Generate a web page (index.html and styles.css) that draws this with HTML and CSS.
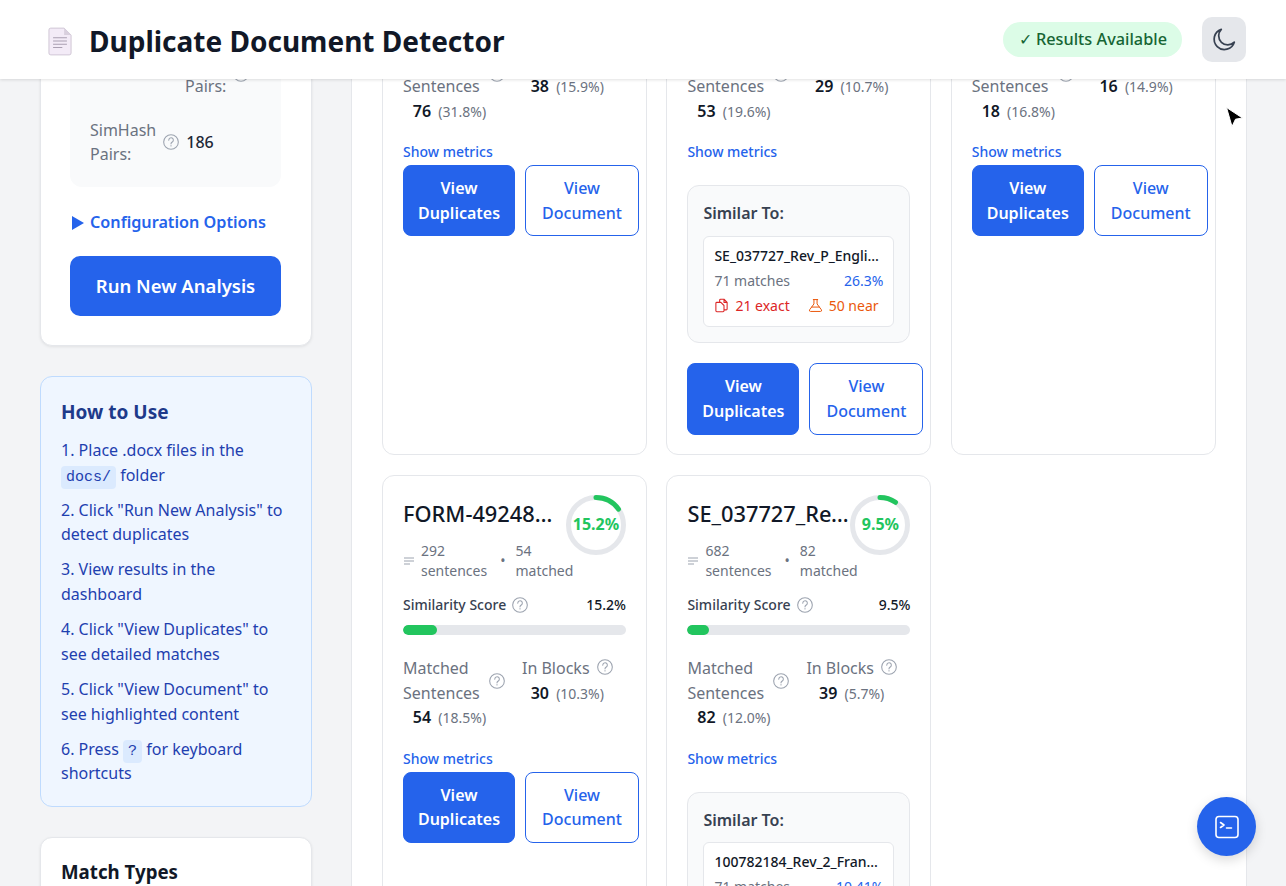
FILE: index.html
```html
<!DOCTYPE html>
<html lang="en">
<head>
  <meta charset="UTF-8">
  <meta name="viewport" content="width=device-width, initial-scale=1.0">
  <title>Duplicate Document Detector</title>
  <link rel="stylesheet" href="styles.css">
</head>
<body>
  <svg class="sprite" aria-hidden="true">
    <symbol id="help" viewBox="0 0 24 24">
      <circle cx="12" cy="12" r="11" fill="none" stroke="currentColor" stroke-width="1.6"/>
      <path d="M8.7 9.200a3.400 3.400 0 1 1 5.200 2.800c-1.200.8-1.900 1.500-1.900 2.800" fill="none" stroke="currentColor" stroke-width="1.6" stroke-linecap="round"/>
      <circle cx="12" cy="17.800" r="1.100" fill="currentColor"/>
    </symbol>
    <symbol id="lines" viewBox="0 0 12 12">
      <path d="M1 3h10M1 6h10M1 9h6" fill="none" stroke="currentColor" stroke-width="1"/>
    </symbol>
    <symbol id="copy" viewBox="0 0 24 24">
      <path d="M9 7V3.500A1.500 1.500 0 0 1 10.500 2H16l5 5v10.500a1.500 1.500 0 0 1-1.500 1.500H16M16 2v5h5M4.500 7H11l5 5v8.500a1.500 1.500 0 0 1-1.500 1.500h-10A1.500 1.500 0 0 1 3 20.500v-12A1.500 1.500 0 0 1 4.500 7z" fill="none" stroke="currentColor" stroke-width="1.7" stroke-linejoin="round"/>
    </symbol>
    <symbol id="flask" viewBox="0 0 24 24">
      <path d="M8.500 2.500h7M9.500 2.500v7L2.600 18.800A1.800 1.800 0 0 0 4 21.500h16a1.800 1.800 0 0 0 1.400-2.700L14.500 9.500v-7M6 14.500h12" fill="none" stroke="currentColor" stroke-width="1.600" stroke-linecap="round" stroke-linejoin="round"/>
    </symbol>
  </svg>

  <header class="topbar">
    <div class="brand">
      <svg class="brand-icon" width="24" height="29" viewBox="0 0 26 30">
        <path d="M3 .5h14.500L25 8v19.500a2 2 0 0 1-2 2H3a2 2 0 0 1-2-2v-25a2 2 0 0 1 2-2z" fill="#f3ebf7" stroke="#cdc3d3"/>
        <path d="M17.500.5V8H25z" fill="#d9d0de"/>
        <path d="M5.500 11h15M5.500 14.500h15M5.500 18h15M5.500 21.500h10" stroke="#aaa0b2" stroke-width="1.200"/>
      </svg>
      <h1>Duplicate Document Detector</h1>
    </div>
    <div class="topbar-actions">
      <span class="status-pill">✓ Results Available</span>
      <button class="theme-btn" aria-label="Toggle theme">
        <svg width="26" height="26" viewBox="0 0 24 24" fill="none" stroke="#374151" stroke-width="1.600" stroke-linecap="round" stroke-linejoin="round">
          <path d="M21.500 14A9.500 9.500 0 1 1 9.500 2.200 8 8 0 0 0 21.500 14z"/>
        </svg>
      </button>
    </div>
  </header>

  <div class="layout">
    <aside class="sidebar">
      <section class="panel panel-run">
        <div class="stat-box">
          <div class="stat stat-offset">
            <span class="stat-label">Exact Pairs:</span>
            <svg class="help"><use href="#help"/></svg>
          </div>
          <div class="stat">
            <span class="stat-label">SimHash Pairs:</span>
            <svg class="help"><use href="#help"/></svg>
            <span class="stat-value">186</span>
          </div>
        </div>
        <div class="config-toggle"><span class="caret"></span>Configuration Options</div>
        <button class="run-btn">Run New Analysis</button>
      </section>

      <section class="panel-help">
        <h3>How to Use</h3>
        <p>1. Place .docx files in the <code>docs/</code> folder</p>
        <p>2. Click "Run New Analysis" to detect duplicates</p>
        <p>3. View results in the dashboard</p>
        <p>4. Click "View Duplicates" to see detailed matches</p>
        <p>5. Click "View Document" to see highlighted content</p>
        <p>6. Press <code>?</code> for keyboard shortcuts</p>
      </section>

      <section class="panel panel-types">
        <h3>Match Types</h3>
      </section>
    </aside>

    <main class="results">
      <div class="card-grid">
        <!-- first row is scrolled under the header, only the lower part shows -->
        <article class="card card-scrolled">
          <div class="metrics">
            <div class="metric">
              <div class="metric-label"><span>Matched Sentences</span><svg class="help"><use href="#help"/></svg></div>
              <div class="metric-value"><b>76</b> <small>(31.8%)</small></div>
            </div>
            <div class="metric">
              <div class="metric-label"><span>In Blocks</span><svg class="help"><use href="#help"/></svg></div>
              <div class="metric-value"><b>38</b> <small>(15.9%)</small></div>
            </div>
          </div>
          <a class="show-metrics">Show metrics</a>
          <div class="card-actions">
            <button class="btn btn-primary">View Duplicates</button>
            <button class="btn btn-outline">View Document</button>
          </div>
        </article>

        <article class="card card-scrolled">
          <div class="metrics">
            <div class="metric">
              <div class="metric-label"><span>Matched Sentences</span><svg class="help"><use href="#help"/></svg></div>
              <div class="metric-value"><b>53</b> <small>(19.6%)</small></div>
            </div>
            <div class="metric">
              <div class="metric-label"><span>In Blocks</span><svg class="help"><use href="#help"/></svg></div>
              <div class="metric-value"><b>29</b> <small>(10.7%)</small></div>
            </div>
          </div>
          <a class="show-metrics">Show metrics</a>
          <div class="similar">
            <h4>Similar To:</h4>
            <div class="similar-item">
              <div class="similar-name">SE_037727_Rev_P_English_Final.docx</div>
              <div class="similar-row"><span>71 matches</span><span class="similar-pct">26.3%</span></div>
              <div class="similar-tags">
                <span class="tag-exact"><svg class="tag-icon"><use href="#copy"/></svg>21 exact</span>
                <span class="tag-near"><svg class="tag-icon"><use href="#flask"/></svg>50 near</span>
              </div>
            </div>
          </div>
          <div class="card-actions">
            <button class="btn btn-primary">View Duplicates</button>
            <button class="btn btn-outline">View Document</button>
          </div>
        </article>

        <article class="card card-scrolled">
          <div class="metrics">
            <div class="metric">
              <div class="metric-label"><span>Matched Sentences</span><svg class="help"><use href="#help"/></svg></div>
              <div class="metric-value"><b>18</b> <small>(16.8%)</small></div>
            </div>
            <div class="metric">
              <div class="metric-label"><span>In Blocks</span><svg class="help"><use href="#help"/></svg></div>
              <div class="metric-value"><b>16</b> <small>(14.9%)</small></div>
            </div>
          </div>
          <a class="show-metrics">Show metrics</a>
          <div class="card-actions">
            <button class="btn btn-primary">View Duplicates</button>
            <button class="btn btn-outline">View Document</button>
          </div>
        </article>

        <article class="card">
          <div class="card-head">
            <h2 class="card-title">FORM-49248W_Rev_3.docx</h2>
            <div class="ring">
              <svg width="60" height="60" viewBox="0 0 60 60">
                <circle cx="30" cy="30" r="27.500" fill="none" stroke="#e5e7eb" stroke-width="5"/>
                <circle cx="30" cy="30" r="27.500" fill="none" stroke="#22c55e" stroke-width="5" stroke-linecap="round" pathLength="100" stroke-dasharray="15.2 100" transform="rotate(-90 30 30)"/>
              </svg>
              <span class="ring-text">15.2%</span>
            </div>
          </div>
          <div class="card-meta">
            <svg class="meta-icon"><use href="#lines"/></svg>
            <span class="meta-text">292 sentences</span>
            <span class="meta-dot">•</span>
            <span class="meta-text">54 matched</span>
          </div>
          <div class="score-row">
            <span class="score-label">Similarity Score<svg class="help"><use href="#help"/></svg></span>
            <span class="score-value">15.2%</span>
          </div>
          <div class="bar"><div class="bar-fill" style="width: 15.2%"></div></div>
          <div class="metrics">
            <div class="metric">
              <div class="metric-label"><span>Matched Sentences</span><svg class="help"><use href="#help"/></svg></div>
              <div class="metric-value"><b>54</b> <small>(18.5%)</small></div>
            </div>
            <div class="metric">
              <div class="metric-label"><span>In Blocks</span><svg class="help"><use href="#help"/></svg></div>
              <div class="metric-value"><b>30</b> <small>(10.3%)</small></div>
            </div>
          </div>
          <a class="show-metrics">Show metrics</a>
          <div class="card-actions">
            <button class="btn btn-primary">View Duplicates</button>
            <button class="btn btn-outline">View Document</button>
          </div>
        </article>

        <article class="card">
          <div class="card-head">
            <h2 class="card-title">SE_037727_Rev_P.docx</h2>
            <div class="ring">
              <svg width="60" height="60" viewBox="0 0 60 60">
                <circle cx="30" cy="30" r="27.500" fill="none" stroke="#e5e7eb" stroke-width="5"/>
                <circle cx="30" cy="30" r="27.500" fill="none" stroke="#22c55e" stroke-width="5" stroke-linecap="round" pathLength="100" stroke-dasharray="9.5 100" transform="rotate(-90 30 30)"/>
              </svg>
              <span class="ring-text">9.5%</span>
            </div>
          </div>
          <div class="card-meta">
            <svg class="meta-icon"><use href="#lines"/></svg>
            <span class="meta-text">682 sentences</span>
            <span class="meta-dot">•</span>
            <span class="meta-text">82 matched</span>
          </div>
          <div class="score-row">
            <span class="score-label">Similarity Score<svg class="help"><use href="#help"/></svg></span>
            <span class="score-value">9.5%</span>
          </div>
          <div class="bar"><div class="bar-fill" style="width: 9.5%"></div></div>
          <div class="metrics">
            <div class="metric">
              <div class="metric-label"><span>Matched Sentences</span><svg class="help"><use href="#help"/></svg></div>
              <div class="metric-value"><b>82</b> <small>(12.0%)</small></div>
            </div>
            <div class="metric">
              <div class="metric-label"><span>In Blocks</span><svg class="help"><use href="#help"/></svg></div>
              <div class="metric-value"><b>39</b> <small>(5.7%)</small></div>
            </div>
          </div>
          <a class="show-metrics">Show metrics</a>
          <div class="similar">
            <h4>Similar To:</h4>
            <div class="similar-item">
              <div class="similar-name">100782184_Rev_2_France_Final.docx</div>
              <div class="similar-row"><span>71 matches</span><span class="similar-pct">10.41%</span></div>
            </div>
          </div>
        </article>
      </div>
    </main>
  </div>

  <button class="console-btn" aria-label="Open console">
    <svg width="26" height="26" viewBox="0 0 26 26" fill="none" stroke="#fff" stroke-width="1.600" stroke-linecap="round" stroke-linejoin="round">
      <rect x="2" y="2.500" width="22" height="21" rx="3"/>
      <path d="M6.500 8.500l3.500 2.500-3.500 2.500M12.500 14h5"/>
    </svg>
  </button>

  <svg class="cursor" width="20" height="24" viewBox="0 0 20 24">
    <path d="M1.500.5L17.500 11l-7 1.200L7 19.500z" fill="#000" stroke="#fff" stroke-width="1"/>
  </svg>
</body>
</html>
```

FILE: styles.css
```css
* {
  box-sizing: border-box;
}

html, body {
  height: 100%;
}

body {
  font-family: "Noto Sans", Arial, sans-serif;
  font-size: 16px;
  line-height: 1.55;
  margin: 0;
  background-color: #f3f4f6;
  color: #111827;
  overflow: hidden;
}

h1, h2, h3, h4, p {
  margin: 0;
}

button {
  font-family: inherit;
  cursor: pointer;
}

.sprite {
  display: none;
}

/* Header */
.topbar {
  position: relative;
  z-index: 10;
  display: flex;
  align-items: center;
  justify-content: space-between;
  height: 79px;
  margin-bottom: 1px;
  padding: 0 40px 0 48px;
  background-color: white;
  box-shadow: 0 1px 3px rgba(0, 0, 0, 0.12);
}

.brand {
  display: flex;
  align-items: center;
  gap: 17px;
}

.brand-icon {
  margin-top: 4px;
}

.brand h1 {
  font-size: 28px;
  font-weight: 700;
  line-height: 1.2;
  margin-top: 4px;
}

.topbar-actions {
  display: flex;
  align-items: center;
  gap: 20px;
}

.status-pill {
  padding: 5px 15px 5px 16px;
  font-size: 16.3px;
  line-height: 25px;
  font-weight: 500;
  color: #166534;
  background-color: #dcfce7;
  border-radius: 18px;
}

.theme-btn {
  display: flex;
  align-items: center;
  justify-content: center;
  width: 44px;
  height: 45px;
  padding: 0;
  border: none;
  border-radius: 10px;
  background-color: #e5e7eb;
}

/* Page is scrolled, so both columns start behind the header */
.layout {
  display: flex;
  gap: 39px;
  margin-top: -40px;
  padding: 0 40px;
}

.sidebar {
  display: flex;
  flex-direction: column;
  gap: 30px;
  width: 272px;
  flex-shrink: 0;
}

.panel {
  background-color: white;
  border: 1px solid #e5e7eb;
  border-radius: 12px;
  box-shadow: 0 1px 3px rgba(0, 0, 0, 0.08);
}

.panel-run {
  padding: 0 30px 29px 29px;
}

.stat-box {
  display: flex;
  flex-direction: column;
  gap: 19px;
  padding: 8px 20px 20px;
  background-color: #f9fafb;
  border-radius: 12px;
}

.stat {
  display: flex;
  align-items: center;
  gap: 7px;
}

.stat-offset {
  padding-left: 95px;
}

.stat-label {
  width: min-content;
  color: #6b7280;
}

.stat-value {
  font-weight: 500;
  color: #1f2937;
}

.help {
  width: 16px;
  height: 16px;
  flex-shrink: 0;
  color: #9ca3af;
}

.config-toggle {
  display: flex;
  align-items: center;
  gap: 6px;
  margin: 23px 0 21px;
  padding-left: 2px;
  font-size: 16.2px;
  font-weight: 600;
  color: #2563eb;
}

.caret {
  width: 0;
  height: 0;
  border-left: 12px solid #2563eb;
  border-top: 7px solid transparent;
  border-bottom: 7px solid transparent;
}

.run-btn {
  display: block;
  width: 100%;
  padding: 16px;
  font-size: 18.5px;
  line-height: 28px;
  font-weight: 600;
  color: white;
  background-color: #2563eb;
  border: none;
  border-radius: 10px;
}

.panel-help {
  padding: 21px 20px 20px;
  color: #1e40af;
  background-color: #eff6ff;
  border: 1px solid #bfdbfe;
  border-radius: 12px;
}

.panel-help h3, .panel-types h3 {
  font-size: 19px;
  font-weight: 700;
  margin-bottom: 10px;
}

.panel-types h3 {
  font-size: 18.7px;
}

.panel-help h3 {
  color: #1e3a8a;
}

.panel-help p {
  margin-bottom: 10.2px;
}

.panel-help p:last-child {
  margin-bottom: 0;
}

.panel-help code {
  font-family: "Liberation Mono", monospace;
  font-size: 15px;
  line-height: 1;
  padding: 3px 5px;
  background-color: #dbeafe;
  border-radius: 4px;
}

.panel-types {
  padding: 20px;
  min-height: 200px;
}

/* Results */
.results {
  flex: 1;
  min-height: 1200px;
  padding: 0 30px;
  background-color: white;
  border-left: 1px solid #e5e7eb;
  border-right: 1px solid #e5e7eb;
}

.card-grid {
  display: grid;
  grid-template-columns: repeat(3, 265px);
  column-gap: 19.4px;
  row-gap: 20px;
}

.card {
  min-width: 0;
  padding: 20px 20px 19px;
  background-color: white;
  border: 1px solid #e5e7eb;
  border-radius: 12px;
}

.card-scrolled {
  padding-top: 8px;
}

/* the ring hangs down next to the sentence counts */
.card-head {
  display: flex;
  align-items: flex-start;
  margin-bottom: -14px;
}

.card-title {
  flex: 1;
  min-width: 0;
  font-size: 21.8px;
  font-weight: 500;
  line-height: 35px;
  white-space: nowrap;
  overflow: hidden;
  text-overflow: ellipsis;
}

.ring {
  position: relative;
  width: 60px;
  height: 60px;
  margin-top: -1px;
  flex-shrink: 0;
}

.ring-text {
  position: absolute;
  inset: 0;
  display: flex;
  align-items: center;
  justify-content: center;
  font-size: 16px;
  font-weight: 700;
  color: #22c55e;
}

.card-meta {
  display: flex;
  align-items: center;
  gap: 6px;
  margin-bottom: 14px;
  font-size: 14px;
  line-height: 20px;
  color: #6b7280;
}

.meta-icon {
  width: 12px;
  height: 12px;
  flex-shrink: 0;
  color: #9ca3af;
}

.meta-text {
  width: min-content;
}

.meta-dot {
  margin: 0 4px 0 7px;
}

.score-row {
  display: flex;
  align-items: center;
  justify-content: space-between;
  font-size: 14px;
  line-height: 20px;
  margin-bottom: 10px;
}

.score-label {
  display: flex;
  align-items: center;
  gap: 6px;
  font-weight: 500;
  color: #374151;
}

.score-value {
  font-weight: 500;
}

.bar {
  height: 10px;
  background-color: #e5e7eb;
  border-radius: 5px;
  overflow: hidden;
}

.bar-fill {
  height: 100%;
  background-color: #22c55e;
  border-radius: 5px;
}

.metrics {
  display: flex;
  align-items: flex-start;
  gap: 17px;
  margin-top: 21px;
}

.card-scrolled .metrics {
  margin-top: 0;
}

.metric {
  text-align: center;
  white-space: nowrap;
}

.metric:first-child {
  flex: 0 0 102px;
  white-space: normal;
}

.metric:first-child .metric-value {
  padding-right: 9px;
}

.metric-label {
  display: flex;
  align-items: center;
  gap: 8px;
  text-align: left;
  color: #6b7280;
}

.metric:last-child .metric-label {
  gap: 7px;
  align-items: flex-start;
}

.metric:last-child .help {
  margin-top: 3px;
}

.metric-value b {
  font-weight: 600;
}

.metric-value small {
  margin-left: 3px;
  font-size: 14px;
  color: #6b7280;
}

.show-metrics {
  display: block;
  margin-top: 16px;
  font-size: 14px;
  line-height: 25px;
  font-weight: 500;
  color: #2563eb;
}

.card-actions {
  display: flex;
  gap: 10px;
  padding-top: 0.5px;
}

.btn {
  flex-shrink: 0;
  padding: 10px;
  font-size: 16px;
  line-height: 1.55;
  border-radius: 8px;
}

.btn-primary {
  width: 112px;
  font-weight: 600;
  color: white;
  background-color: #2563eb;
  border: 1px solid #2563eb;
}

.btn-outline {
  width: 114px;
  font-weight: 500;
  color: #2563eb;
  background-color: white;
  border: 1px solid #2563eb;
}

.similar {
  margin: 20.5px 0 20px;
  padding: 15px;
  background-color: #f9fafb;
  border: 1px solid #e5e7eb;
  border-radius: 12px;
}

.similar h4 {
  margin-bottom: 10px;
  font-size: 16px;
  font-weight: 600;
  color: #374151;
}

.similar-item {
  padding: 6px 10px 8px;
  background-color: white;
  border: 1px solid #e5e7eb;
  border-radius: 6px;
  font-size: 14px;
  line-height: 25px;
}

.similar-name {
  font-weight: 500;
  white-space: nowrap;
  overflow: hidden;
  text-overflow: ellipsis;
}

.similar-row {
  display: flex;
  justify-content: space-between;
  color: #6b7280;
}

.similar-tags {
  display: flex;
  gap: 18px;
}

.similar-pct {
  color: #2563eb;
}

.tag-exact, .tag-near {
  display: flex;
  align-items: center;
  gap: 6px;
}

.tag-exact {
  color: #dc2626;
}

.tag-near {
  color: #ea580c;
}

.tag-icon {
  width: 15px;
  height: 15px;
}

/* Floating bits */
.console-btn {
  position: fixed;
  right: 30px;
  bottom: 30px;
  z-index: 20;
  display: flex;
  align-items: center;
  justify-content: center;
  width: 59px;
  height: 59px;
  padding: 0;
  border: none;
  border-radius: 50%;
  background-color: #2563eb;
  box-shadow: 0 4px 12px rgba(0, 0, 0, 0.15);
}

.cursor {
  position: fixed;
  left: 1225px;
  top: 107px;
  z-index: 30;
}
```
